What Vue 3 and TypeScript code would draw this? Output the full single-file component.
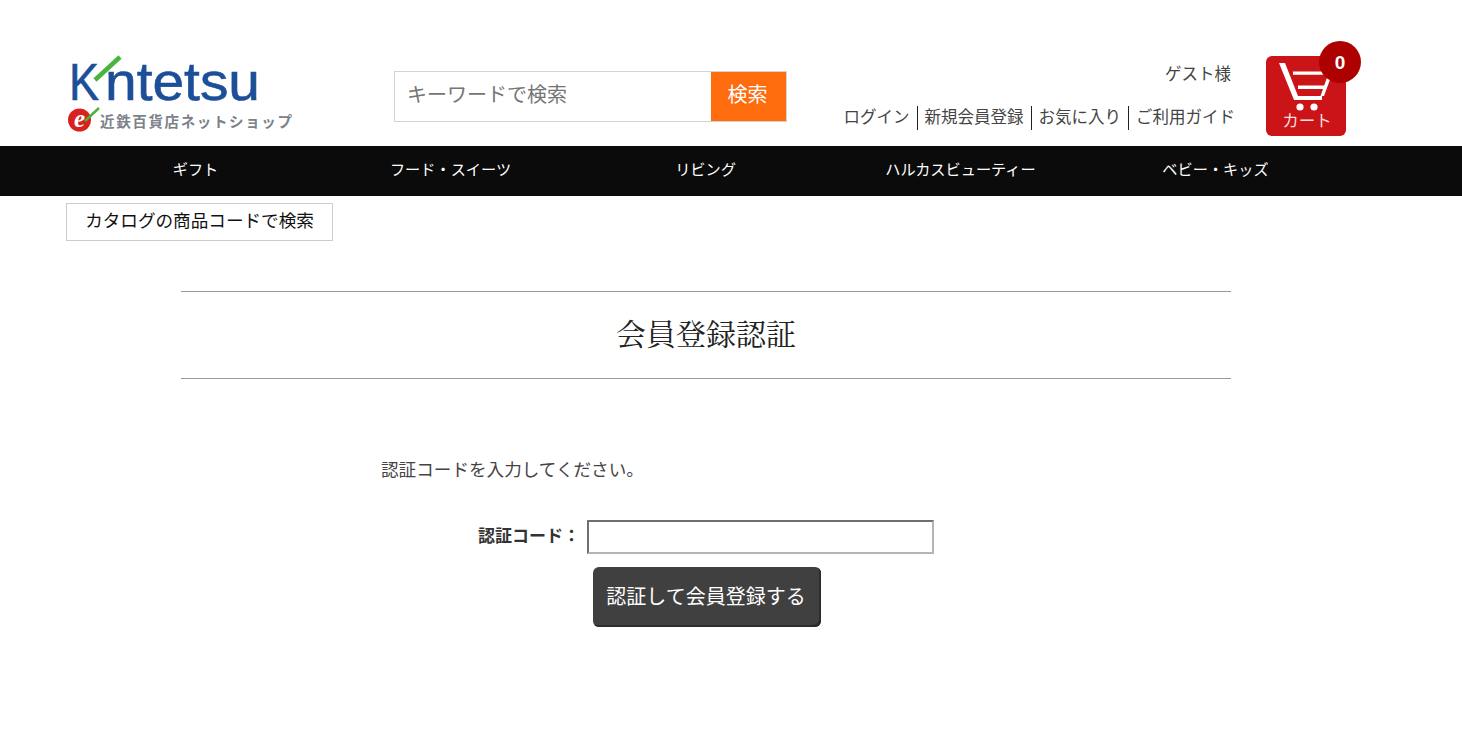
<script setup lang="ts">
const navItems: string[] = ['ギフト', 'フード・スイーツ', 'リビング', 'ハルカスビューティー', 'ベビー・キッズ']
const links: string[] = ['ログイン', '新規会員登録', 'お気に入り', 'ご利用ガイド']
</script>

<template>
  <div class="page">
    <header class="header">
      <a class="logo" aria-label="Kintetsu">
        <svg width="232" height="90" viewBox="0 0 232 90">
          <text x="3" y="52" class="logo-k" textLength="30" lengthAdjust="spacingAndGlyphs">K</text>
          <path d="M29 32 L54 9" stroke="#4bb43c" stroke-width="4.5" fill="none" />
          <text x="39" y="52" class="logo-word" textLength="155" lengthAdjust="spacingAndGlyphs">ntetsu</text>
          <circle cx="13.5" cy="72" r="11.5" fill="#d8221f" />
          <text x="13.5" y="79" class="logo-e">e</text>
          <path d="M19 73 L33 60" stroke="#4bb43c" stroke-width="2.5" fill="none" />
          <text x="34" y="79" class="logo-sub" textLength="192" lengthAdjust="spacing">近鉄百貨店ネットショップ</text>
        </svg>
      </a>
      <form class="search" @submit.prevent>
        <input class="search-input" type="text" placeholder="キーワードで検索" />
        <button class="search-btn" type="button">検索</button>
      </form>
      <div class="user">
        <div class="guest">ゲスト様</div>
        <ul class="links">
          <li v-for="l in links" :key="l">{{ l }}</li>
        </ul>
      </div>
      <a class="cart" aria-label="カート">
        <svg width="80" height="80" viewBox="0 0 80 80">
          <rect width="80" height="80" rx="6" fill="#cb1417" />
          <path d="M13 7 H19 L32 40 H56 V44 H28 Z" fill="#fff" />
          <path d="M27 15.5 H67 L58 40 H54.5 L62 18.8 H27 Z" fill="#fff" />
          <path d="M32 29.5 H59 V33 H32 Z" fill="#fff" />
          <circle cx="34" cy="51" r="3.6" fill="#fff" />
          <circle cx="48" cy="51" r="3.6" fill="#fff" />
          <text x="41" y="71" class="cart-text">カート</text>
        </svg>
        <span class="badge">0</span>
      </a>
    </header>

    <nav class="nav">
      <a v-for="n in navItems" :key="n" class="nav-item">{{ n }}</a>
    </nav>

    <div class="catalog-row">
      <a class="catalog">カタログの商品コードで検索</a>
    </div>

    <main class="main">
      <h1 class="title">会員登録認証</h1>
      <p class="lead">認証コードを入力してください。</p>
      <div class="field">
        <label class="label" for="code">認証コード：</label>
        <input id="code" class="code" type="text" />
      </div>
      <div class="actions">
        <button class="submit" type="button">認証して会員登録する</button>
      </div>
    </main>
  </div>
</template>

<style>
html, body { margin: 0; background: #fff; }
</style>

<style scoped>
.page {
  height: 755px;
  overflow: hidden;
  font-family: "Noto Sans CJK JP", "Noto Sans", sans-serif;
  color: #333;
  background: #fff;
}
.header {
  height: 146px;
  display: flex;
  align-items: flex-start;
  padding-left: 66px;
  box-sizing: border-box;
}
.logo { display: block; width: 232px; height: 90px; margin-top: 48px; }
.logo-k, .logo-word {
  font-family: "Liberation Sans", sans-serif;
  fill: #1d4f98;
  stroke: #1d4f98;
  stroke-width: 0.6px;
}
.logo-k { font-size: 51px; }
.logo-word { font-size: 54px; }
.logo-e {
  font-family: "Liberation Serif", serif;
  font-style: italic;
  font-weight: 700;
  font-size: 25px;
  fill: #fff;
  text-anchor: middle;
}
.logo-sub {
  font-family: "Noto Sans CJK JP", sans-serif;
  font-weight: 700;
  font-size: 14.5px;
  fill: #7b828a;
}
.search {
  display: flex;
  width: 393px;
  height: 51px;
  margin: 71px 0 0 96px;
  border: 1px solid #d3d3d3;
  box-sizing: border-box;
}
.search-input {
  flex: 1;
  min-width: 0;
  border: 0;
  outline: 0;
  padding: 0 12px 6px;
  font: inherit;
  font-size: 20px;
  background: #fff;
}
.search-input::placeholder { color: #757575; opacity: 1; }
.search-btn {
  width: 75px;
  border: 0;
  padding: 0 2px 6px 0;
  background: #ff6c0e;
  color: #fff;
  font: inherit;
  font-size: 20px;
}
.user {
  width: 392px;
  margin-left: 55px;
  font-size: 16.5px;
  color: #444;
  text-align: right;
}
.guest { margin-top: 60px; line-height: 26px; padding-right: 3px; }
.links {
  list-style: none;
  display: flex;
  justify-content: flex-end;
  margin: 20px -1px 0 0;
  padding: 0;
  line-height: 24px;
}
.links li {
  height: 24px;
  padding: 0 7px;
  border-left: 1px solid #222;
  white-space: nowrap;
  line-height: 20px;
}
.links li:first-child { border-left: 0; }
.links li:last-child { padding-right: 0; }
.cart {
  position: relative;
  display: block;
  width: 80px;
  height: 80px;
  margin: 56px 0 0 32px;
}
.cart svg { display: block; }
.cart-text {
  font-size: 16.5px;
  fill: #fbdede;
  text-anchor: middle;
}
.badge {
  position: absolute;
  left: 53px;
  top: -15px;
  width: 42px;
  height: 42px;
  border-radius: 50%;
  background: #ad0000;
  color: #fff;
  font-family: "Liberation Sans", sans-serif;
  font-weight: 700;
  font-size: 19px;
  line-height: 43px;
  text-align: center;
}
.nav {
  height: 50px;
  background: #0b0b0b;
  display: flex;
  padding-left: 68px;
}
.nav-item {
  width: 255px;
  color: #fff;
  font-size: 15.2px;
  line-height: 44px;
  text-align: center;
}
.catalog-row { padding: 7px 0 0 66px; }
.catalog {
  display: block;
  width: 267px;
  height: 38px;
  box-sizing: border-box;
  border: 1px solid #ccc;
  color: #111;
  font-size: 17.6px;
  line-height: 32px;
  text-align: center;
}
.main { width: 1050px; margin: 50px 0 0 181px; }
.title {
  margin: 0;
  height: 88px;
  box-sizing: border-box;
  border-top: 1px solid #999;
  border-bottom: 1px solid #999;
  font-family: "Noto Serif CJK JP", "Liberation Serif", "Noto Sans CJK JP", serif;
  font-weight: 400;
  font-size: 30px;
  line-height: 80px;
  text-align: center;
  color: #222;
}
.lead {
  margin: 77px 0 0 200px;
  font-size: 17.6px;
  line-height: 26px;
  color: #444;
}
.field {
  display: flex;
  align-items: center;
  margin: 38px 0 0 297px;
}
.label {
  font-size: 17px;
  font-weight: 700;
  color: #333;
  margin-right: 7px;
  padding-bottom: 6px;
  white-space: nowrap;
}
.code {
  width: 347px;
  height: 34px;
  box-sizing: border-box;
  border-width: 2px;
  border-style: solid;
  border-color: #6f6f6f #b5b5b5 #b5b5b5 #6f6f6f;
  outline: 0;
  padding: 0 4px;
  background: #fff;
}
.actions { margin: 13px 0 0 412px; }
.submit {
  display: block;
  width: 228px;
  height: 60px;
  box-sizing: border-box;
  border: 0;
  border-radius: 6px;
  background: #404040;
  box-shadow: inset -2px -2px 0 #2c2c2c;
  color: #fff;
  font: inherit;
  font-size: 20px;
  padding: 0 2px 3px 0;
}
</style>
